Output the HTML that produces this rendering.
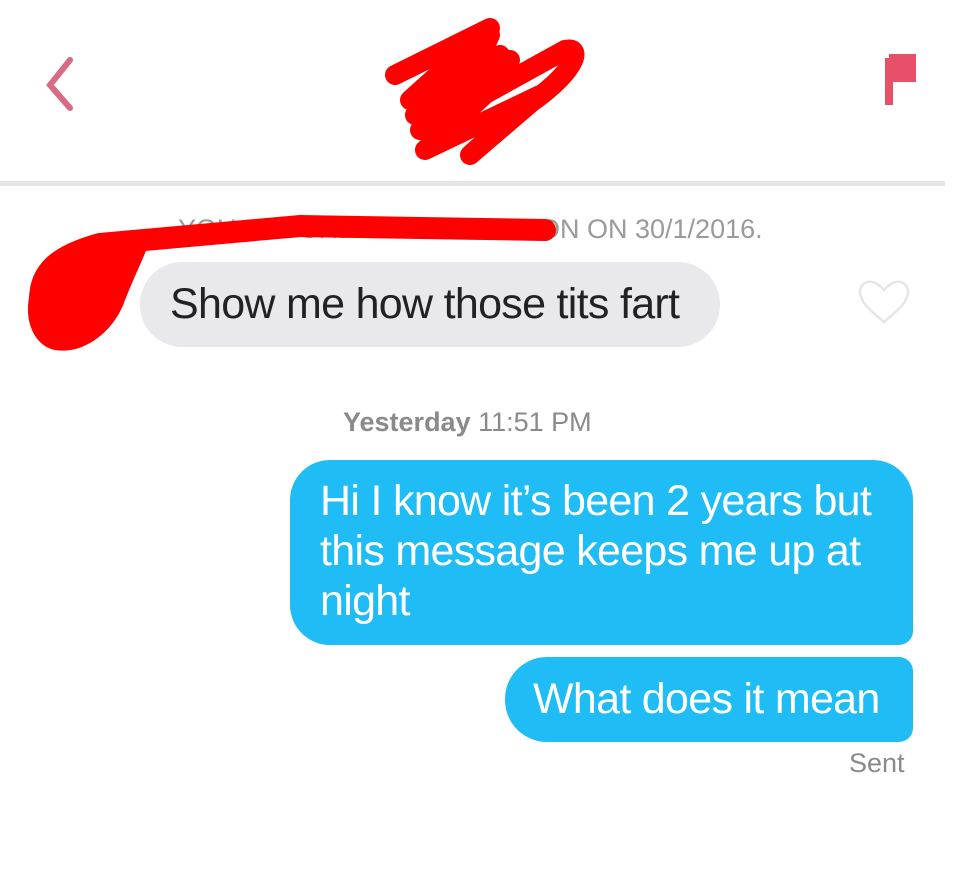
<!DOCTYPE html>
<html><head><meta charset="utf-8"><style>
body{margin:0;width:960px;height:890px;background:#fff;position:relative;overflow:hidden;font-family:"Liberation Sans",sans-serif}
.a{position:absolute;white-space:nowrap}
.b{position:absolute;font-size:43px;letter-spacing:-0.7px}
</style></head><body>
<div class="a" style="left:0;top:181px;width:945px;height:5px;background:#e6e6e6"></div>
<div class="a" style="left:178px;top:214px;font-size:27px;color:#9a9a9a">YOU MATCHED WITH SOMEON ON 30/1/2016.</div>
<div class="b" style="left:140px;top:262px;width:580px;height:85px;background:#e9e9eb;border-radius:42px;color:#222;box-sizing:border-box;padding:18px 0 0 30px;white-space:nowrap">Show me how those tits fart</div>
<svg class="a" style="left:0;top:0" width="960" height="890">
<path d="M70 60 L50 85 L70 108" stroke="#d96a85" stroke-width="6" fill="none" stroke-linecap="round"/>
<path d="M889 58 V105 M889 58 H912 V78 H889" stroke="#e8506a" stroke-width="8" fill="#e8506a"/>
<path d="M884 322 C870 310 860 302 860 292 C860 282 872 276 884 290 C896 276 908 282 908 292 C908 302 898 310 884 322Z" stroke="#e6e6e6" stroke-width="2.5" fill="none"/>
<g stroke="#f00" stroke-width="20" fill="none" stroke-linecap="round" stroke-linejoin="round">
<path d="M395 75 L490 28 L410 100 L500 55 L420 130 L565 50 C585 45 575 75 520 110 L470 155 L540 95 L425 150 L495 85 L415 115 L470 60"/>
<path d="M440 60 L490 35 L470 80 L510 60 L460 120"/>
</g>
<g stroke="#f00" stroke-width="22" fill="none" stroke-linecap="round">
<path d="M545 230 L300 226 L100 244 C60 255 40 270 40 300"/>
</g>
<path d="M150 240 C110 240 50 250 35 280 C20 310 30 345 55 350 C85 355 115 330 125 300 C135 275 145 255 150 240Z" fill="#f00"/>
<path d="M90 330 C60 345 45 340 40 330 L60 300Z" fill="#f00"/>
</svg>
<div class="a" style="left:343px;top:407px;font-size:27px;color:#8a8a8a"><b>Yesterday</b> 11:51 PM</div>
<div class="b" style="left:290px;top:460px;width:623px;height:185px;background:#1fbcf5;border-radius:40px 40px 14px 40px;color:#fff;box-sizing:border-box;padding:16px 30px 0 30px;line-height:50px">Hi I know it’s been 2 years but<br>this message keeps me up at<br>night</div>
<div class="b" style="left:505px;top:657px;width:408px;height:85px;background:#1fbcf5;border-radius:42px 14px 14px 42px;color:#fff;box-sizing:border-box;padding:18px 0 0 28px;white-space:nowrap">What does it mean</div>
<div class="a" style="left:849px;top:748px;font-size:27px;color:#8a8a8a">Sent</div>
</body></html>
